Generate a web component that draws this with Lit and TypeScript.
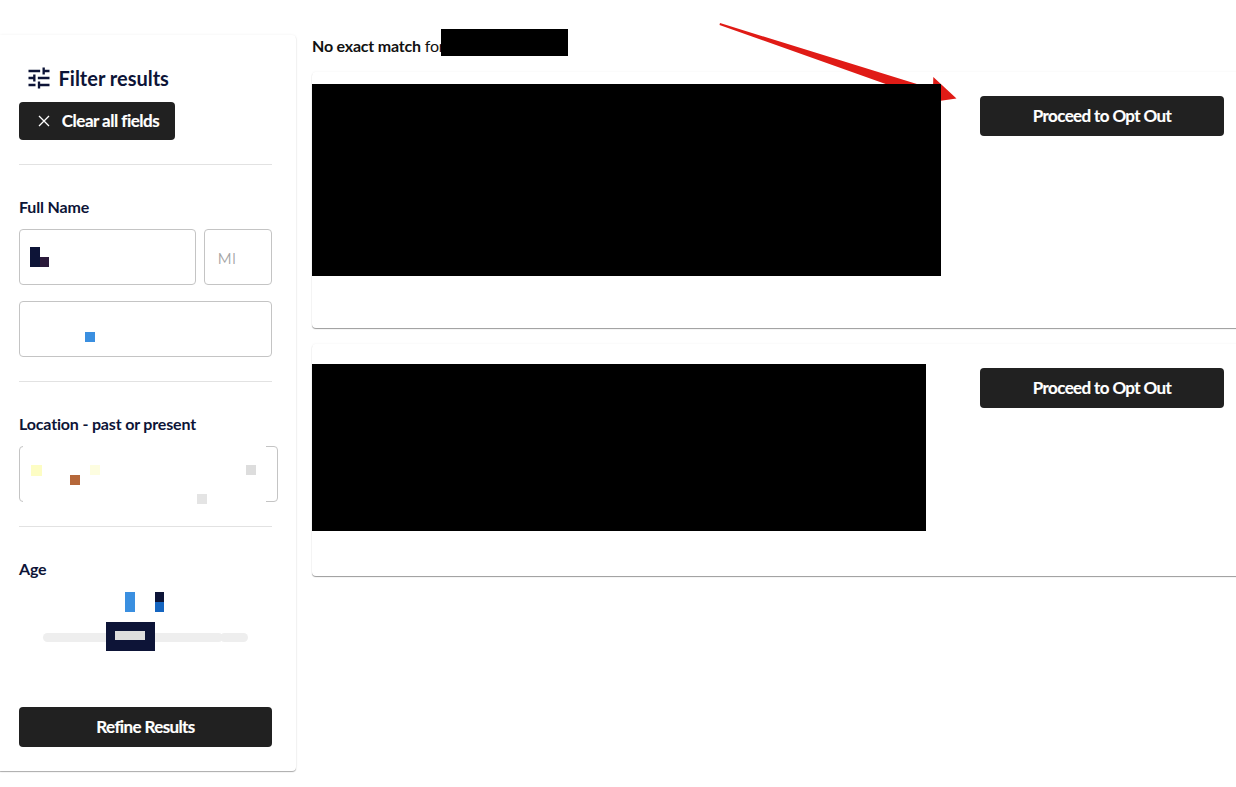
import { LitElement, html, css } from "lit";
import { customElement } from "lit/decorators.js";

@customElement("app-root")
export class AppRoot extends LitElement {
  static styles = css`
    :host { display: block; height: 787px; overflow: hidden; position: relative; background: #fff; font-family: Lato, "Liberation Sans", sans-serif; color: #0d1437; }
    * { box-sizing: border-box; }
    .page { display: flex; align-items: flex-start; gap: 16px; }
    .side { flex: 0 0 296px; min-width: 0; width: 296px; height: 736px; margin-top: 35px; padding: 0 24px 0 19px; background: #fff; border-radius: 0 4px 4px 0; box-shadow: 0 1px 1px rgba(0,0,0,.32), 0 0 3px rgba(0,0,0,.06); display: flex; flex-direction: column; }
    .head { display: flex; align-items: center; gap: 6px; height: 24px; margin: 31px 0 0 5.5px; font-size: 20px; font-weight: 700; letter-spacing: 0; }
    .head svg { width: 28px; height: 28px; flex: none; }
    .btn { display: flex; align-items: center; justify-content: center; border: 0; padding: 0 0 2px; background: #212121; color: #fff; border-radius: 4px; font: 700 17px Lato, "Liberation Sans", sans-serif; letter-spacing: -.62px; -webkit-text-stroke: .15px #fff; }
    .clear { width: 156px; height: 38px; gap: 11px; margin-top: 12px; padding: 0 0 1px 2px; letter-spacing: -.5px; }
    .clear svg { width: 14px; height: 14px; }
    .rule { height: 1px; background: #e2e2e2; flex: none; }
    .r1 { margin-top: 24px; }
    .label { font-size: 16px; font-weight: 700; line-height: 20px; letter-spacing: -.17px; }
    .l1 { margin-top: 32px; }
    .row { display: flex; gap: 8px; margin-top: 12px; }
    .field { position: relative; height: 56px; border: 1px solid #c4c4c4; border-radius: 4px; background: #fff; display: flex; align-items: center; }
    .first { flex: 0 0 177px; }
    .mi { flex: 1; min-width: 0; padding: 3px 0 0 12.5px; color: #a4a4a4; font: 400 15px Montserrat, "Open Sans", sans-serif; }
    .last { margin-top: 16px; }
    .r2 { margin-top: 24px; }
    .l2 { margin-top: 32px; }
    .loc { margin-top: 12px; width: 259px; flex: none; }
    .mask { position: absolute; left: 3px; right: 11px; top: -1px; bottom: -1px; background: #fff; }
    .r3 { margin-top: 24px; }
    .l3 { margin-top: 32px; }
    .px { position: absolute; }
    .age { position: relative; height: 128px; flex: none; }
    .track { position: absolute; height: 9px; border-radius: 5px; background: #eeeeee; }
    .refine { width: 253px; height: 40px; flex: none; }
    .main { flex: 1; min-width: 0; position: relative; }
    .match { position: relative; height: 72px; padding-top: 36px; font-size: 16px; line-height: 20px; color: #111; letter-spacing: -.2px; }
    .match b { font-weight: 700; }
    .match i { position: absolute; left: 129px; top: 29px; width: 127px; height: 27px; background: #000; }
    .card { display: flex; align-items: flex-start; background: #fff; border-radius: 4px 0 0 4px; box-shadow: 0 1px 1px rgba(0,0,0,.4), 0 -1px 2px rgba(0,0,0,.025); margin-right: -4px; }
    .c1 { height: 256px; padding-top: 12px; }
    .c2 { height: 232px; margin-top: 16px; padding-top: 20px; }
    .block { background: #000; flex: none; position: relative; z-index: 2; }
    .c1 .block { width: 629px; height: 192px; }
    .c2 .block { width: 614px; height: 167px; }
    .opt { position: absolute; left: 668px; width: 244px; height: 40px; }
    .c1 .opt { top: 96px; }
    .c2 .opt { top: 368px; }
    .arrow { position: absolute; left: 0; top: 0; width: 1236px; height: 787px; pointer-events: none; z-index: 1; }
  `;

  px(x: number, y: number, w: number, h: number, c: string) {
    return html`<span class="px" style="left:${x}px;top:${y}px;width:${w}px;height:${h}px;background:${c}"></span>`;
  }

  render() {
    return html`
      <div class="page">
        <aside class="side">
          <div class="head">
            <svg viewBox="0 0 24 24" fill="#0d1437"><path d="M3 17v2h6v-2H3zM3 5v2h10V5H3zm10 16v-2h8v-2h-8v-2h-2v6h2zM7 9v2H3v2h4v2h2V9H7zm14 4v-2H11v2h10zm-6-4h2V7h4V5h-4V3h-2v6z"/></svg>
            <span>Filter results</span>
          </div>
          <button class="btn clear">
            <svg viewBox="0 0 14 14" fill="none" stroke="#fff" stroke-width="1.3"><path d="M2 2l10 10M12 2L2 12"/></svg>
            <span>Clear all fields</span>
          </button>
          <div class="rule r1"></div>
          <div class="label l1">Full Name</div>
          <div class="row">
            <div class="field first">
              ${this.px(10, 17, 10, 20, "#0d1437")}
              ${this.px(20, 27, 9, 10, "#2a1a3a")}
            </div>
            <div class="field mi">MI</div>
          </div>
          <div class="field last">${this.px(65, 30, 10, 10, "#3a8fe0")}</div>
          <div class="rule r2"></div>
          <div class="label l2">Location - past or present</div>
          <div class="field loc">
            <span class="mask"></span>
            ${this.px(11, 18, 11, 11, "#fdfdc4")}
            ${this.px(50, 28, 10, 10, "#b5673a")}
            ${this.px(70, 18, 10, 10, "#fdfde0")}
            ${this.px(226, 18, 10, 10, "#dddddd")}
            ${this.px(177, 47, 10, 10, "#e4e4e4")}
          </div>
          <div class="rule r3"></div>
          <div class="label l3">Age</div>
          <div class="age">
            ${this.px(106, 13, 10, 20, "#3a8fe0")}
            ${this.px(136, 13, 9, 10, "#0d1437")}
            ${this.px(136, 23, 9, 10, "#1565c0")}
            <span class="track" style="left:24px;top:54px;width:180px"></span>
            <span class="track" style="left:201px;top:54px;width:28px"></span>
            ${this.px(87, 43, 49, 29, "#0d1437")}
            ${this.px(96, 52, 30, 9, "#dddddd")}
          </div>
          <button class="btn refine">Refine Results</button>
        </aside>
        <main class="main">
          <div class="match"><b>No exact match</b> for<i></i></div>
          <section class="card c1"><div class="block"></div><button class="btn opt">Proceed to Opt Out</button></section>
          <section class="card c2"><div class="block"></div><button class="btn opt">Proceed to Opt Out</button></section>
        </main>
      </div>
      <svg class="arrow" viewBox="0 0 1236 787"><path fill="#e01b16" d="M720 23 L719.5 25 L925 98 L925 103 L956.5 98.5 L933.3 77 L933 89 Z"/></svg>
    `;
  }
}
